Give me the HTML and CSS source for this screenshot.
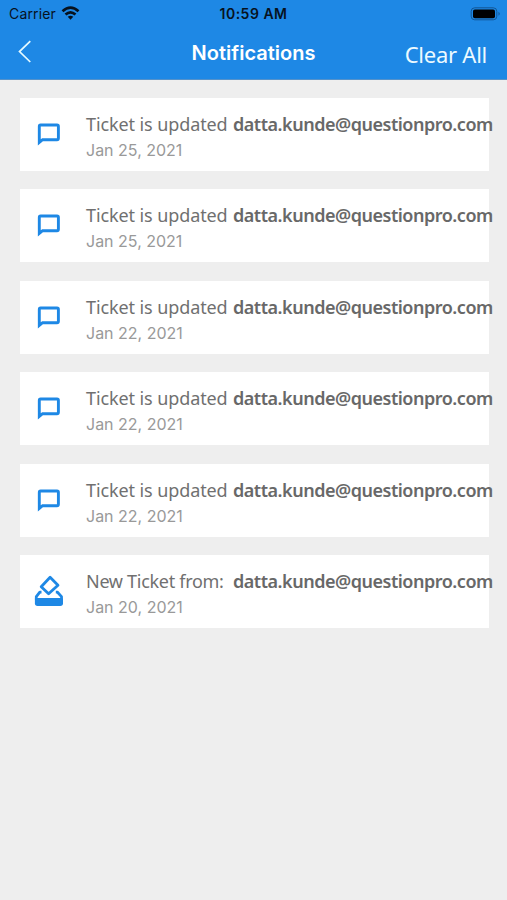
FILE: index.html
```html
<!DOCTYPE html>
<html lang="en">
<head>
<meta charset="utf-8">
<title>Notifications</title>
<link rel="stylesheet" href="styles.css">
</head>
<body>
<svg class="defs" width="0" height="0">
  <symbol id="chat" viewBox="0 0 30 32"><path d="M6.6 7H23Q24.4 7 24.4 8.4V20.3Q24.4 21.7 23 21.7H8.6L5.3 24.4V8.4Q5.3 7 6.6 7Z" fill="none" stroke="#1e88e5" stroke-width="2.9" stroke-linejoin="miter"/></symbol>
  <symbol id="ballot" viewBox="0 0 30 32"><path d="M16.1 2.3L24 10.2L14.6 18.8L7.2 11.8Z" fill="none" stroke="#1e88e5" stroke-width="2.8" stroke-linejoin="round"/><path d="M7.5 17.2H5.8L2.3 21.6V24.5H27.5V21.6L23.5 17.2H21.8" fill="none" stroke="#1e88e5" stroke-width="2.8" stroke-linejoin="round"/><path d="M.9 23.5H29V28.2Q29 30.9 26.3 30.9H3.6Q.9 30.9 .9 28.2Z" fill="#1e88e5"/></symbol>
</svg>
<header class="header">
  <div class="status">
    <div class="status-left"><span class="carrier">Carrier</span>
      <svg class="wifi" viewBox="0 0 18 14"><g fill="none" stroke="#07121e" stroke-width="2.7"><path d="M1 5.2Q9-1.8 17 5.2"/><path d="M4 8.6Q9 4.2 14 8.6"/></g><path d="M6.2 10.8Q9 8.6 11.8 10.8L9 13.7Z" fill="#07121e"/></svg>
    </div>
    <time class="clock">10:59 AM</time>
    <svg class="battery" viewBox="0 0 31 14"><rect x="1.2" y=".8" width="25.6" height="12" rx="3.5" fill="none" stroke="#125695"/><rect x="3" y="2.5" width="22" height="8.8" rx="1.8" fill="#000"/><path d="M28.5 4.8Q31 6.8 28.5 8.8Z" fill="#125695"/></svg>
  </div>
  <nav class="nav">
    <svg class="back" viewBox="0 0 14 24"><path d="M12.3 1.2L1.5 11.6L12.3 22" fill="none" stroke="#e5faff" stroke-width="1.7"/></svg>
    <h1 class="title">Notifications</h1>
    <span class="clear">Clear All</span>
  </nav>
</header>
<main class="list">
  <article class="card"><svg class="icon"><use href="#chat"/></svg><div class="body"><p class="message"><span class="kind">Ticket is updated</span><b class="email">datta.kunde@questionpro.com</b></p><p class="date">Jan 25, 2021</p></div></article>
  <article class="card"><svg class="icon"><use href="#chat"/></svg><div class="body"><p class="message"><span class="kind">Ticket is updated</span><b class="email">datta.kunde@questionpro.com</b></p><p class="date">Jan 25, 2021</p></div></article>
  <article class="card"><svg class="icon"><use href="#chat"/></svg><div class="body"><p class="message"><span class="kind">Ticket is updated</span><b class="email">datta.kunde@questionpro.com</b></p><p class="date">Jan 22, 2021</p></div></article>
  <article class="card"><svg class="icon"><use href="#chat"/></svg><div class="body"><p class="message"><span class="kind">Ticket is updated</span><b class="email">datta.kunde@questionpro.com</b></p><p class="date">Jan 22, 2021</p></div></article>
  <article class="card"><svg class="icon"><use href="#chat"/></svg><div class="body"><p class="message"><span class="kind">Ticket is updated</span><b class="email">datta.kunde@questionpro.com</b></p><p class="date">Jan 22, 2021</p></div></article>
  <article class="card"><svg class="icon"><use href="#ballot"/></svg><div class="body"><p class="message"><span class="kind new">New Ticket from:</span><b class="email">datta.kunde@questionpro.com</b></p><p class="date">Jan 20, 2021</p></div></article>
</main>
</body>
</html>
```
FILE: styles.css
```css
* { box-sizing: border-box; }
body { margin: 0; min-height: 900px; background: #eee; font-family: Inter, sans-serif; overflow-x: hidden; }
h1, p { margin: 0; }
.defs { position: absolute; }
.header { height: 80px; background: #1e88e5; border-bottom: 1px solid #5592ca; }
.status { height: 27px; display: grid; grid-template-columns: 1fr auto 1fr; align-items: center; color: #07121e; }
.status-left { display: flex; align-items: center; gap: 5px; padding-left: 9px; }
.carrier { font-size: 14px; letter-spacing: .15px; }
.wifi { width: 19px; height: 14px; margin-top: -1px; }
.clock { font-size: 14px; font-weight: 600; letter-spacing: .5px; }
.battery { width: 31px; height: 14px; justify-self: end; margin-right: 6px; }
.nav { height: 52px; display: grid; grid-template-columns: 1fr auto 1fr; align-items: start; color: #fff; }
.back { width: 14px; height: 24px; margin: 13px 0 0 17.5px; }
.title { font-size: 20px; line-height: 24px; font-weight: 600; letter-spacing: 0; margin-top: 13.5px; }
.clear { justify-self: end; margin: 14px 20px 0 0; font: 22px/27px "Noto Sans", sans-serif; letter-spacing: -.25px; color: #edfaff; }
.list { padding: 18px 18px 0 20px; display: flex; flex-direction: column; gap: 18.4px; }
.card { height: 73px; background: #fff; display: flex; }
.icon { width: 30px; height: 32px; margin: 20px 0 0 14px; flex: none; }
.body { margin-left: 22px; white-space: nowrap; }
.message { display: flex; margin-top: 13px; font: 18px/26px "Noto Sans", sans-serif; color: #707070; }
.kind { flex: none; width: 147px; letter-spacing: -.1px; }
.kind.new { letter-spacing: -.3px; }
.email { font-weight: 600; letter-spacing: -.48px; color: #686868; }
.date { margin-top: 1px; font-size: 16px; line-height: 24px; color: #999; }
```
